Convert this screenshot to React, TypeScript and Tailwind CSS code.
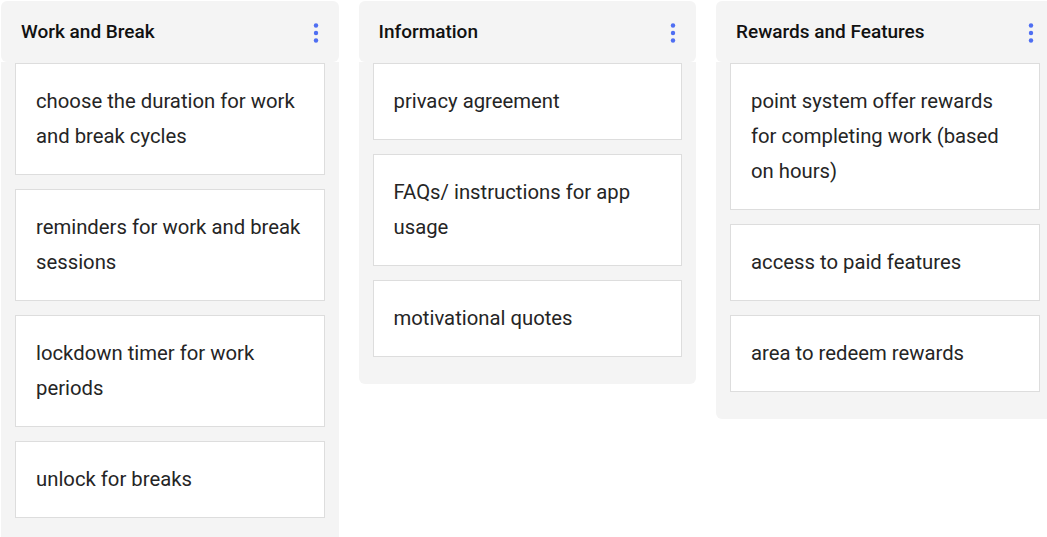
const columns = [
  {
    title: "Work and Break",
    items: [
      "choose the duration for work and break cycles",
      "reminders for work and break sessions",
      "lockdown timer for work periods",
      "unlock for breaks",
    ],
  },
  {
    title: "Information",
    items: ["privacy agreement", "FAQs/ instructions for app usage", "motivational quotes"],
  },
  {
    title: "Rewards and Features",
    items: [
      "point system offer rewards for completing work (based on hours)",
      "access to paid features",
      "area to redeem rewards",
    ],
  },
]

function Kebab() {
  return (
    <svg width="8" height="22" viewBox="0 0 8 22" className="shrink-0">
      <circle cx="4" cy="3.5" r="2.2" fill="#4e6ef2" />
      <circle cx="4" cy="11" r="2.2" fill="#4e6ef2" />
      <circle cx="4" cy="18.5" r="2.2" fill="#4e6ef2" />
    </svg>
  )
}

export default function App() {
  return (
    <div
      className="flex w-[1047px] h-[537px] items-start gap-[20px] overflow-hidden bg-white pl-px pt-px"
      style={{ fontFamily: "Roboto, 'Liberation Sans', sans-serif" }}
    >
      {columns.map((col) => (
        <div key={col.title} className="flex w-[337.5px] shrink-0 flex-col">
          {/* header */}
          <div className="flex h-[61px] items-center justify-between rounded-md bg-[#f4f4f4] pl-5 pr-[19px] pt-[2px]">
            <span className="text-[19px] font-medium text-[#111]">{col.title}</span>
            <Kebab />
          </div>
          {/* cards */}
          <div className="flex flex-col gap-[14px] rounded-b-md bg-[#f4f4f4] px-[14px] pt-px pb-[27px]">
            {col.items.map((item) => (
              <div
                key={item}
                className="border border-[#dddddd] bg-white px-5 py-5 text-[20.3px] leading-[35px] text-[#252525]"
              >
                {item}
              </div>
            ))}
          </div>
        </div>
      ))}
    </div>
  )
}
